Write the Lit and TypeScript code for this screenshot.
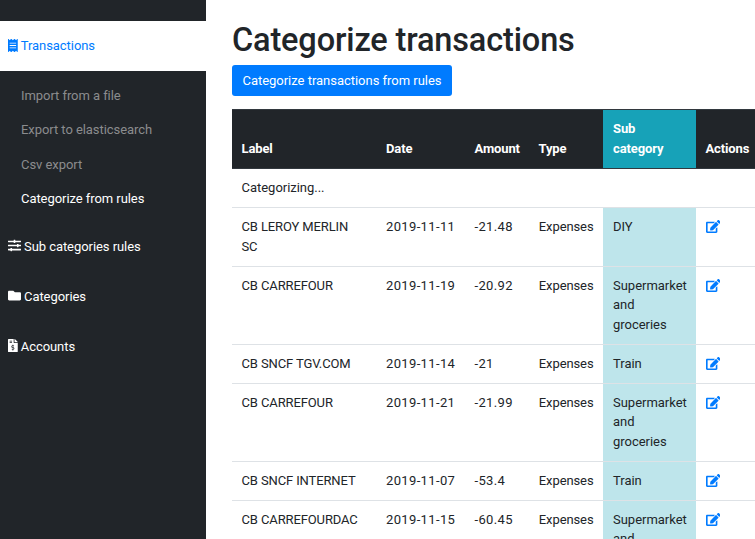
import { LitElement, html, css, svg } from "lit";
import { customElement, property } from "lit/decorators.js";
import { classMap } from "lit/directives/class-map.js";

const ICONS: Record<string, { w: number; d: string }> = {
  receipt: {
    w: 384,
    d: "M358.4 3.2L320 48 265.6 3.2a15.9 15.9 0 0 0-19.2 0L192 48 137.6 3.2a15.9 15.9 0 0 0-19.2 0L64 48 25.6 3.2C15-4.7 0 2.8 0 16v480c0 13.2 15 20.7 25.6 12.8L64 464l54.4 44.8a15.9 15.9 0 0 0 19.2 0L192 464l54.4 44.8a15.9 15.9 0 0 0 19.2 0L320 464l38.4 44.8c10.5 7.9 25.6.4 25.6-12.8V16c0-13.3-15.1-20.7-25.6-12.8zM320 360c0 4.4-3.6 8-8 8H72c-4.4 0-8-3.6-8-8v-16c0-4.4 3.6-8 8-8h240c4.4 0 8 3.6 8 8v16zm0-96c0 4.4-3.6 8-8 8H72c-4.4 0-8-3.6-8-8v-16c0-4.4 3.6-8 8-8h240c4.4 0 8 3.6 8 8v16zm0-96c0 4.4-3.6 8-8 8H72c-4.4 0-8-3.6-8-8v-16c0-4.4 3.6-8 8-8h240c4.4 0 8 3.6 8 8v16z",
  },
  sliders: {
    w: 512,
    d: "M496 384H160v-16c0-8.8-7.2-16-16-16h-32c-8.8 0-16 7.2-16 16v16H16c-8.8 0-16 7.2-16 16v32c0 8.8 7.2 16 16 16h80v16c0 8.8 7.2 16 16 16h32c8.8 0 16-7.2 16-16v-16h336c8.8 0 16-7.2 16-16v-32c0-8.8-7.2-16-16-16zm0-160h-80v-16c0-8.8-7.2-16-16-16h-32c-8.8 0-16 7.2-16 16v16H16c-8.8 0-16 7.2-16 16v32c0 8.8 7.2 16 16 16h336v16c0 8.8 7.2 16 16 16h32c8.8 0 16-7.2 16-16v-16h80c8.8 0 16-7.2 16-16v-32c0-8.8-7.2-16-16-16zm0-160H288V48c0-8.8-7.2-16-16-16h-32c-8.8 0-16 7.2-16 16v16H16C7.2 64 0 71.2 0 80v32c0 8.8 7.2 16 16 16h208v16c0 8.8 7.2 16 16 16h32c8.8 0 16-7.2 16-16v-16h208c8.8 0 16-7.2 16-16V80c0-8.8-7.2-16-16-16z",
  },
  folder: {
    w: 512,
    d: "M464 128H272l-64-64H48C21.5 64 0 85.5 0 112v288c0 26.5 21.5 48 48 48h416c26.5 0 48-21.5 48-48V176c0-26.5-21.5-48-48-48z",
  },
  invoice: {
    w: 384,
    d: "M377 105L279.1 7c-4.5-4.5-10.6-7-17-7H256v128h128v-6.1c0-6.3-2.5-12.4-7-16.9zM224 136V0H24C10.7 0 0 10.7 0 24v464c0 13.3 10.7 24 24 24h336c13.3 0 24-10.7 24-24V160H248c-13.2 0-24-10.8-24-24zM64 72c0-4.42 3.58-8 8-8h80c4.42 0 8 3.58 8 8v16c0 4.42-3.58 8-8 8H72c-4.42 0-8-3.58-8-8V72zm0 80v-16c0-4.42 3.58-8 8-8h80c4.42 0 8 3.58 8 8v16c0 4.42-3.58 8-8 8H72c-4.42 0-8-3.58-8-8zm144 263.88V440c0 4.42-3.58 8-8 8h-16c-4.42 0-8-3.58-8-8v-24.29c-11.29-.58-22.27-4.52-31.37-11.35-3.9-2.93-4.1-8.77-.57-12.14l11.75-11.21c2.77-2.64 6.89-2.76 10.13-.73 3.87 2.42 8.26 3.72 12.82 3.72h28.11c6.5 0 11.8-5.92 11.8-13.19 0-5.95-3.61-11.19-8.77-12.73l-45-13.5c-18.59-5.58-31.58-23.42-31.58-43.39 0-24.52 19.05-44.44 42.67-45.07V232c0-4.42 3.58-8 8-8h16c4.42 0 8 3.58 8 8v24.29c11.29.58 22.27 4.51 31.37 11.35 3.9 2.93 4.1 8.77.57 12.14l-11.75 11.21c-2.77 2.64-6.89 2.76-10.13.73-3.87-2.43-8.26-3.72-12.82-3.72h-28.11c-6.5 0-11.8 5.92-11.8 13.19 0 5.95 3.61 11.19 8.77 12.73l45 13.5c18.59 5.58 31.58 23.42 31.58 43.39 0 24.53-19.05 44.44-42.67 45.07z",
  },
  edit: {
    w: 576,
    d: "M402.6 83.2l90.2 90.2c3.8 3.8 3.8 10 0 13.8L274.4 405.6l-92.8 10.3c-12.4 1.4-22.9-9.1-21.5-21.5l10.3-92.8L388.8 83.2c3.8-3.8 10-3.8 13.8 0zm162-22.9l-48.8-48.8c-15.2-15.2-39.9-15.2-55.2 0l-35.4 35.4c-3.8 3.8-3.8 10 0 13.8l90.2 90.2c3.8 3.8 10 3.8 13.8 0l35.4-35.4c15.2-15.3 15.2-40 0-55.2zM384 346.2V448H64V128h229.8c3.2 0 6.2-1.3 8.5-3.5l40-40c7.6-7.6 2.2-20.5-8.5-20.5H48C21.5 64 0 85.5 0 112v352c0 26.5 21.5 48 48 48h352c26.5 0 48-21.5 48-48V306.2c0-10.7-12.9-16-20.5-8.5l-40 40c-2.2 2.3-3.5 5.3-3.5 8.5z",
  },
};

@customElement("fa-icon")
class FaIcon extends LitElement {
  @property() name = "";
  static styles = css`
    :host { display: inline-block; height: 1em; line-height: 1; vertical-align: -0.125em; }
    svg { display: block; height: 1em; width: auto; fill: currentColor; }
  `;
  render() {
    const i = ICONS[this.name];
    return i
      ? html`<svg viewBox="0 0 ${i.w} 512" aria-hidden="true">${svg`<path d=${i.d}></path>`}</svg>`
      : null;
  }
}

const SUB_LINKS = ["Import from a file", "Export to elasticsearch", "Csv export", "Categorize from rules"];

const LINKS = [
  { icon: "sliders", text: "Sub categories rules" },
  { icon: "folder", text: "Categories" },
  { icon: "invoice", text: "Accounts" },
];

const ROWS = [
  ["CB LEROY MERLIN SC", "2019-11-11", "-21.48", "DIY"],
  ["CB CARREFOUR", "2019-11-19", "-20.92", "Supermarket and groceries"],
  ["CB SNCF TGV.COM", "2019-11-14", "-21", "Train"],
  ["CB CARREFOUR", "2019-11-21", "-21.99", "Supermarket and groceries"],
  ["CB SNCF INTERNET", "2019-11-07", "-53.4", "Train"],
  ["CB CARREFOURDAC", "2019-11-15", "-60.45", "Supermarket and groceries"],
];

@customElement("app-root")
class AppRoot extends LitElement {
  static styles = css`
    :host {
      display: flex;
      height: 100vh;
      overflow: hidden;
      background: #fff;
      color: #212529;
      font: 13px/19.5px Roboto, sans-serif;
      letter-spacing: -0.02px;
    }
    * { box-sizing: border-box; }
    .sidebar { flex: 0 0 206px; background: #212529; color: #fff; padding-top: 21px; letter-spacing: -0.06px; }
    .link { display: flex; align-items: center; gap: 3px; height: 50px; padding: 1px 8px 0; }
    .link fa-icon { margin-bottom: 1.5px; }
    .link.active { background: #fff; color: #007bff; padding-top: 0; }
    .sub { height: 150px; padding: 8px 0 0 21px; margin: 0; list-style: none; }
    .sub li { height: 34.4px; line-height: 34.4px; color: #8b8c8e; }
    .sub li.current { color: #fff; }
    main { flex: 0 0 527px; padding: 21px 0 0 26px; }
    h1 { margin: 0 0 5px; font-size: 32.5px; line-height: 39px; font-weight: 500; letter-spacing: -0.15px; white-space: nowrap; }
    button {
      display: block; height: 31px; width: 220px; padding: 0; border: 0; border-radius: 3px;
      background: #007bff; color: #fff; font: inherit; letter-spacing: inherit; white-space: nowrap;
    }
    .table { margin-top: 13px; width: 527px; }
    .row {
      display: grid;
      grid-template-columns: 144.5px 88.5px 64px 74px 93px 63px;
      border-top: 1px solid #dee2e6;
    }
    .cell { padding: 9.25px 9.5px; }
    .label { letter-spacing: -0.12px; }
    .number { letter-spacing: 0.36px; }
    .type { letter-spacing: -0.1px; padding-left: 9.8px; }
    .tinted { background: #bee5eb; padding-left: 10px; padding-right: 8px; }
    .head { background: #212529; color: #fff; font-weight: 700; border: solid #32383e; border-width: 1px 0; height: 59.5px; letter-spacing: -0.12px; }
    .head .cell { display: flex; align-items: flex-end; }
    .head .tinted { background: #17a2b8; }
    .status { border-top: 0; height: 38.5px; }
    .edit { color: #007bff; font-size: 13px; padding-top: 9.75px; padding-bottom: 8.75px; }
  `;

  render() {
    return html`
      <nav class="sidebar">
        <div class="link active"><fa-icon name="receipt"></fa-icon><span>Transactions</span></div>
        <ul class="sub">
          ${SUB_LINKS.map((t, i) => html`<li class=${classMap({ current: i === 3 })}>${t}</li>`)}
        </ul>
        ${LINKS.map((l) => html`<div class="link"><fa-icon name=${l.icon}></fa-icon><span>${l.text}</span></div>`)}
      </nav>
      <main>
        <h1>Categorize transactions</h1>
        <button>Categorize transactions from rules</button>
        <div class="table">
          <div class="row head">
            ${["Label", "Date", "Amount", "Type", "Sub category", "Actions"].map(
              (t, i) => html`<div class=${classMap({ cell: true, tinted: i === 4 })}>${t}</div>`
            )}
          </div>
          <div class="row status"><div class="cell">Categorizing...</div></div>
          ${ROWS.map(
            ([label, date, amount, sub]) => html`
              <div class="row">
                <div class="cell label">${label}</div>
                <div class="cell number">${date}</div>
                <div class="cell number">${amount}</div>
                <div class="cell type">Expenses</div>
                <div class="cell tinted">${sub}</div>
                <div class="cell edit"><fa-icon name="edit"></fa-icon></div>
              </div>
            `
          )}
        </div>
      </main>
    `;
  }
}
